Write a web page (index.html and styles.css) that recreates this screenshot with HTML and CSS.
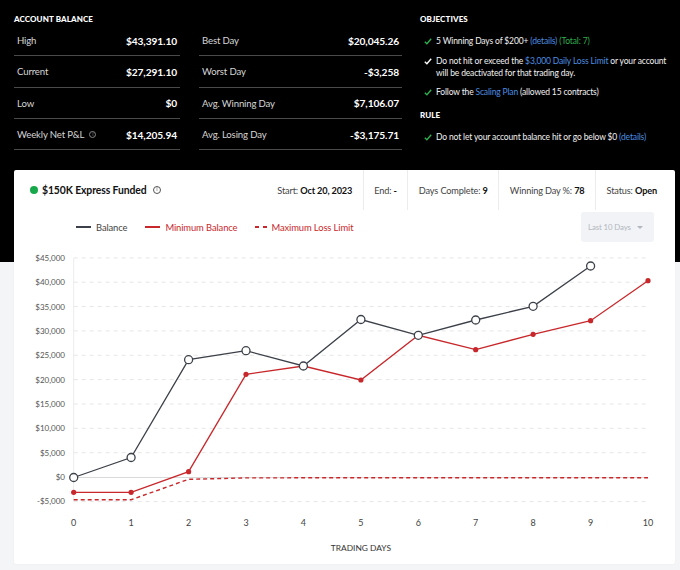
FILE: index.html
```html
<!DOCTYPE html>
<html>
<head>
<meta charset="utf-8">
<link rel="stylesheet" href="styles.css">
</head>
<body>
<div class="top">
  <div class="col col-bal">
    <h3 class="sec-title">Account Balance</h3>
    <div class="row"><span class="lbl">High</span><span class="val">$43,391.10</span></div>
    <div class="row"><span class="lbl">Current</span><span class="val">$27,291.10</span></div>
    <div class="row"><span class="lbl">Low</span><span class="val">$0</span></div>
    <div class="row"><span class="lbl">Weekly Net P&amp;L <span class="info-sm">i</span></span><span class="val">$14,205.94</span></div>
  </div>
  <div class="col col-days">
    <div class="sec-title"></div>
    <div class="row"><span class="lbl">Best Day</span><span class="val">$20,045.26</span></div>
    <div class="row"><span class="lbl">Worst Day</span><span class="val">-$3,258</span></div>
    <div class="row"><span class="lbl">Avg. Winning Day</span><span class="val">$7,106.07</span></div>
    <div class="row"><span class="lbl">Avg. Losing Day</span><span class="val">-$3,175.71</span></div>
  </div>
  <div class="col col-obj">
    <h3 class="sec-title">Objectives</h3>
    <ul class="checks">
      <li><span class="ck green"><svg viewBox="0 0 8 7" width="8" height="7"><path d="M0.8 3.8 L2.9 5.8 L7.2 0.8" fill="none" stroke="currentColor" stroke-width="1.4"/></svg></span><span>5 Winning Days of $200+ <a class="lnk">(details)</a> <span class="tot">(Total: 7)</span></span></li>
      <li><span class="ck white"><svg viewBox="0 0 8 7" width="8" height="7"><path d="M0.8 3.8 L2.9 5.8 L7.2 0.8" fill="none" stroke="currentColor" stroke-width="1.4"/></svg></span><span>Do not hit or exceed the <a class="lnk">$3,000 Daily Loss Limit</a> or your account<br>will be deactivated for that trading day.</span></li>
      <li><span class="ck green"><svg viewBox="0 0 8 7" width="8" height="7"><path d="M0.8 3.8 L2.9 5.8 L7.2 0.8" fill="none" stroke="currentColor" stroke-width="1.4"/></svg></span><span>Follow the <a class="lnk">Scaling Plan</a> (allowed 15 contracts)</span></li>
    </ul>
    <h3 class="sec-title rule-title">Rule</h3>
    <ul class="checks rule-list">
      <li><span class="ck green"><svg viewBox="0 0 8 7" width="8" height="7"><path d="M0.8 3.8 L2.9 5.8 L7.2 0.8" fill="none" stroke="currentColor" stroke-width="1.4"/></svg></span><span>Do not let your account balance hit or go below $0 <a class="lnk">(details)</a></span></li>
    </ul>
  </div>
</div>

<div class="card">
  <div class="card-head">
    <div class="acct">
      <span class="dot"></span>
      <span class="acct-name">$150K Express Funded</span>
      <span class="info">i</span>
    </div>
    <div class="meta">
      <div class="meta-item first">Start: <b>Oct 20, 2023</b></div>
      <div class="meta-item">End: <b>-</b></div>
      <div class="meta-item">Days Complete: <b>9</b></div>
      <div class="meta-item">Winning Day %: <b>78</b></div>
      <div class="meta-item last">Status: <b>Open</b></div>
    </div>
  </div>
  <div class="legend-row">
    <div class="legend">
      <span class="lg"><span class="sw sw-bal"></span>Balance</span>
      <span class="lg red"><span class="sw sw-min"></span>Minimum Balance</span>
      <span class="lg red"><span class="sw sw-max"><i></i><i></i></span>Maximum Loss Limit</span>
    </div>
    <div class="dropdown">Last 10 Days<span class="caret"></span></div>
  </div>
  <svg class="chart" width="661" height="322" viewBox="14 242 661 322">
    <g class="grid">
      <line x1="73.7" x2="648" y1="257.9" y2="257.9"/>
      <line x1="73.7" x2="648" y1="282.2" y2="282.2"/>
      <line x1="73.7" x2="648" y1="306.6" y2="306.6"/>
      <line x1="73.7" x2="648" y1="330.9" y2="330.9"/>
      <line x1="73.7" x2="648" y1="355.3" y2="355.3"/>
      <line x1="73.7" x2="648" y1="379.6" y2="379.6"/>
      <line x1="73.7" x2="648" y1="404" y2="404"/>
      <line x1="73.7" x2="648" y1="428.3" y2="428.3"/>
      <line x1="73.7" x2="648" y1="452.7" y2="452.7"/>
      <line x1="73.7" x2="648" y1="501.4" y2="501.4"/>
    </g>
    <line class="axis" x1="73.7" x2="73.7" y1="257.9" y2="501.4"/>
    <line class="zero" x1="73.7" x2="648" y1="477.5" y2="477.5"/>
    <g class="ylab">
      <text x="65" y="260.9">$45,000</text>
      <text x="65" y="285.2">$40,000</text>
      <text x="65" y="309.6">$35,000</text>
      <text x="65" y="333.9">$30,000</text>
      <text x="65" y="358.3">$25,000</text>
      <text x="65" y="382.6">$20,000</text>
      <text x="65" y="407">$15,000</text>
      <text x="65" y="431.3">$10,000</text>
      <text x="65" y="455.7">$5,000</text>
      <text x="65" y="480">$0</text>
      <text x="65" y="504.4">-$5,000</text>
    </g>
    <g class="xlab">
      <text x="73.7" y="526">0</text>
      <text x="131.1" y="526">1</text>
      <text x="188.6" y="526">2</text>
      <text x="246" y="526">3</text>
      <text x="303.4" y="526">4</text>
      <text x="360.9" y="526">5</text>
      <text x="418.3" y="526">6</text>
      <text x="475.7" y="526">7</text>
      <text x="533.1" y="526">8</text>
      <text x="590.6" y="526">9</text>
      <text x="648" y="526">10</text>
    </g>
    <text class="xtitle" x="360.9" y="551">TRADING DAYS</text>
    <polyline class="maxl" points="73.7,499.7 131.1,499.7 188.6,479.3 246,477.9 303.4,477.8 360.9,477.8 418.3,477.8 475.7,477.8 533.1,477.8 590.6,477.8 648,477.8"/>
    <polyline class="minl" points="73.7,492.3 131.1,492.3 188.6,471.7 246,374.3 303.4,366 360.9,380 418.3,335.3 475.7,349.7 533.1,334.3 590.6,320.7 648,280.7"/>
    <g class="mindots">
      <circle cx="73.7" cy="492.3" r="2.6"/>
      <circle cx="131.1" cy="492.3" r="2.6"/>
      <circle cx="188.6" cy="471.7" r="2.6"/>
      <circle cx="246" cy="374.3" r="2.6"/>
      <circle cx="303.4" cy="366" r="2.6"/>
      <circle cx="360.9" cy="380" r="2.6"/>
      <circle cx="418.3" cy="335.3" r="2.6"/>
      <circle cx="475.7" cy="349.7" r="2.6"/>
      <circle cx="533.1" cy="334.3" r="2.6"/>
      <circle cx="590.6" cy="320.7" r="2.6"/>
      <circle cx="648" cy="280.7" r="2.6"/>
    </g>
    <polyline class="ball" points="73.7,477.5 131.1,457.5 188.6,359.7 246,350.7 303.4,366 360.9,319.5 418.3,335.3 475.7,320 533.1,306.3 590.6,266"/>
    <g class="baldots">
      <circle cx="73.7" cy="477.5" r="4"/>
      <circle cx="131.1" cy="457.5" r="4"/>
      <circle cx="188.6" cy="359.7" r="4"/>
      <circle cx="246" cy="350.7" r="4"/>
      <circle cx="303.4" cy="366" r="4"/>
      <circle cx="360.9" cy="319.5" r="4"/>
      <circle cx="418.3" cy="335.3" r="4"/>
      <circle cx="475.7" cy="320" r="4"/>
      <circle cx="533.1" cy="306.3" r="4"/>
      <circle cx="590.6" cy="266" r="4"/>
    </g>
  </svg>
</div>
</body>
</html>
```

FILE: styles.css
```css
* { box-sizing: border-box; }
html, body { margin: 0; padding: 0; }
body {
  width: 680px;
  height: 570px;
  overflow: hidden;
  font-family: Lato, "Open Sans", "Liberation Sans", sans-serif;
  background: linear-gradient(#000 0, #000 262px, #f4f5f7 262px, #f4f5f7 100%);
}

.top {
  height: 170px;
  display: flex;
  padding: 14px 0 0 14px;
  color: #fff;
}
.col-bal { width: 166px; }
.col-days { width: 203px; margin-left: 19px; }
.col-obj { margin-left: 18px; flex: 1; }

.sec-title {
  margin: 0;
  height: 11px;
  line-height: 11px;
  font-size: 8px;
  font-weight: 900;
  text-transform: uppercase;
  letter-spacing: 0.1px;
  color: #fff;
}
.row {
  height: 31.33px;
  border-bottom: 1px solid #4a4a4a;
  display: flex;
  align-items: center;
  justify-content: space-between;
  padding: 1px 3px 0 3px;
}
.lbl {
  font-size: 9.6px;
  letter-spacing: -0.15px;
  color: #d6d6d6;
  display: flex;
  align-items: center;
}
.val {
  font-size: 10.2px;
  letter-spacing: -0.1px;
  font-weight: 700;
  color: #fff;
}
.info-sm {
  display: inline-flex;
  align-items: center;
  justify-content: center;
  width: 7px;
  height: 7px;
  border: 0.8px solid #888;
  border-radius: 50%;
  font-size: 5px;
  color: #888;
  margin-left: 5px;
  line-height: 1;
}

.checks {
  list-style: none;
  margin: 10px 0 0 0;
  padding: 0;
}
.checks li {
  display: flex;
  font-size: 8.5px;
  letter-spacing: -0.15px;
  line-height: 12px;
  color: #f2f2f2;
  margin-bottom: 7.5px;
  white-space: nowrap;
}
.ck {
  width: 16px;
  flex: none;
  padding-left: 4px;
  padding-top: 3px;
}
.ck svg { display: block; }
.ck.green { color: #2fae4e; }
.ck.white { color: #fff; }
.lnk { color: #4d8fe0; }
.tot { color: #2fae4e; }
.rule-title { margin-top: 11.5px; }
.rule-list { margin-top: 10.5px; }

.card {
  margin-left: 14px;
  width: 661px;
  height: 394px;
  background: #fff;
  border-radius: 2px;
  box-shadow: 0 0 2px rgba(0,0,0,0.06);
  color: #333;
}
.card-head {
  height: 40px;
  display: flex;
  align-items: stretch;
}
.acct {
  display: flex;
  align-items: center;
  padding-left: 16px;
}
.dot {
  width: 8px;
  height: 8px;
  border-radius: 50%;
  background: #17a84b;
  margin-right: 4px;
}
.acct-name {
  font-size: 10.4px;
  letter-spacing: -0.1px;
  font-weight: 700;
  color: #111;
}
.info {
  display: inline-flex;
  align-items: center;
  justify-content: center;
  width: 8.5px;
  height: 8.5px;
  border: 1px solid #555;
  border-radius: 50%;
  font-size: 5.5px;
  color: #555;
  margin-left: 6px;
  line-height: 1;
}
.meta {
  margin-left: auto;
  display: flex;
}
.meta-item {
  display: flex;
  align-items: center;
  padding: 0 10.5px;
  border-left: 1px solid #ececec;
  font-size: 9.2px;
  letter-spacing: -0.15px;
  color: #444;
  white-space: pre;
}
.meta-item b { color: #111; font-weight: 700; }
.meta-item.first { border-left: none; }
.meta-item.last { padding-right: 18px; }

.legend-row {
  height: 30px;
  margin-top: 2px;
  display: flex;
  align-items: center;
  justify-content: space-between;
  padding: 0 21px 0 62px;
}
.legend {
  display: flex;
  align-items: center;
  font-size: 9.4px;
  letter-spacing: -0.1px;
  color: #444;
}
.lg { display: flex; align-items: center; margin-right: 18px; }
.lg.red { color: #c8282b; }
.sw { display: inline-block; width: 15px; height: 2px; margin-right: 5px; }
.sw-bal { background: #3c4048; }
.sw-min { background: #c8282b; }
.sw-max { display: inline-flex; justify-content: space-between; width: 12px; margin-right: 4px; }
.sw-max i { display: block; width: 4px; height: 2px; background: #c8282b; }

.dropdown {
  width: 73px;
  height: 30px;
  background: #f1f3f6;
  border-radius: 3px;
  font-size: 7.8px;
  letter-spacing: -0.1px;
  color: #b2b7bf;
  display: flex;
  align-items: center;
  padding-left: 7px;
  position: relative;
}
.caret {
  position: absolute;
  right: 11px;
  top: 14px;
  width: 0;
  height: 0;
  border-left: 3px solid transparent;
  border-right: 3px solid transparent;
  border-top: 3px solid #b2b7bf;
}

.chart { display: block; }
.grid line { stroke: #e6e6e6; stroke-width: 1; stroke-dasharray: 4 4; }
.axis { stroke: #ececec; stroke-width: 1; }
.zero { stroke: #d9d9d9; stroke-width: 1.2; }
.ylab text { font-size: 8px; fill: #555; text-anchor: end; font-family: Lato, "Open Sans", sans-serif; }
.xlab text { font-size: 9px; fill: #444; text-anchor: middle; font-family: Lato, "Open Sans", sans-serif; }
.xtitle { font-size: 8.4px; fill: #333; text-anchor: middle; font-family: Lato, "Open Sans", sans-serif; }
.maxl { fill: none; stroke: #c8282b; stroke-width: 1.4; stroke-dasharray: 4 3; }
.minl { fill: none; stroke: #c8282b; stroke-width: 1.3; }
.mindots circle { fill: #c8282b; }
.ball { fill: none; stroke: #3c4048; stroke-width: 1.3; }
.baldots circle { fill: #fff; stroke: #3c4048; stroke-width: 1.3; }
```
